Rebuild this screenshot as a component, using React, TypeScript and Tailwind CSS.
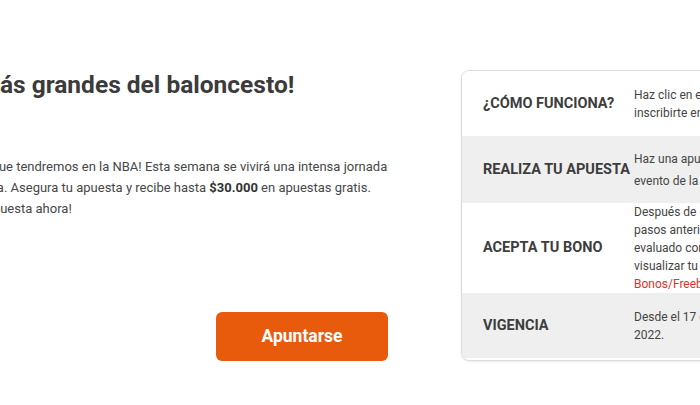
const rows = [
  {
    label: "¿CÓMO FUNCIONA?",
    height: "h-[65px]",
    bg: "bg-white",
    leading: "leading-[18px]",
    lines: ["Haz clic en el botón “Apuntarse” para", "inscribirte en la promoción."],
  },
  {
    label: "REALIZA TU APUESTA",
    height: "h-[67px]",
    bg: "bg-[#efefef]",
    leading: "leading-[22px]",
    lines: ["Haz una apuesta de $30.000 o más en cualquier", "evento de la NBA."],
  },
  {
    label: "ACEPTA TU BONO",
    height: "h-[90px]",
    bg: "bg-white",
    leading: "leading-[18px]",
    lines: [
      "Después de completar los",
      "pasos anteriores, tu apuesta será",
      "evaluado correctamente y podrás",
      "visualizar tu bono en la sección",
    ],
    link: "Bonos/Freebets.",
  },
  {
    label: "VIGENCIA",
    height: "h-[65px]",
    bg: "bg-[#efefef]",
    leading: "leading-[18px]",
    lines: ["Desde el 17 de octubre hasta el 23 de octubre de", "2022."],
  },
]

export default function App() {
  return (
    <div className="h-[405px] w-[700px] overflow-hidden bg-white [font-family:Roboto,sans-serif]">
      <div className="flex pt-[70px]">
        {/* left column, cut by the window edge */}
        <div className="-ml-[58px] flex w-[446px] shrink-0 flex-col">
          <h1 className="-ml-[16px] mt-[1px] whitespace-nowrap text-[24.5px] font-bold leading-[28px] text-[#3b3b3b]">
            ¡Los más grandes del baloncesto!
          </h1>
          <div className="mt-[57px] text-[13px] leading-[21px] text-[#474747]">
            <p className="whitespace-nowrap">
              ¡Todo lo que tendremos en la NBA! Esta semana se vivirá una intensa jornada
            </p>
            <p className="-ml-[6px] whitespace-nowrap">
              competitiva. Asegura tu apuesta y recibe hasta{" "}
              <b className="font-bold text-[#333]">$30.000</b> en apuestas gratis.
            </p>
            <p className="whitespace-nowrap">¡Haz tu apuesta ahora!</p>
          </div>
          <div className="mt-[93px] flex justify-end">
            <button
              type="button"
              className="h-[49px] w-[172px] rounded-[6px] bg-[#e95b0c] text-[17.5px] font-bold text-white"
            >
              Apuntarse
            </button>
          </div>
        </div>

        {/* info table */}
        <div className="ml-[73px] w-[420px] shrink-0 overflow-hidden rounded-[8px] border border-[#dcdcdc] shadow-[0_1px_2px_rgba(0,0,0,0.08)]">
          {rows.map((row) => (
            <div key={row.label} className={`flex ${row.height} ${row.bg}`}>
              <div className="flex w-[172px] shrink-0 items-center pl-[21px] text-[14.5px] font-bold text-[#3d3d3d]">
                {row.label}
              </div>
              <div className={`flex items-center text-[12px] text-[#454545] ${row.leading}`}>
                <div>
                  {row.lines.map((l) => (
                    <div key={l} className="whitespace-nowrap">
                      {l}
                    </div>
                  ))}
                  {row.link && <div className="whitespace-nowrap text-[#e2321f]">{row.link}</div>}
                </div>
              </div>
            </div>
          ))}
        </div>
      </div>
    </div>
  )
}
